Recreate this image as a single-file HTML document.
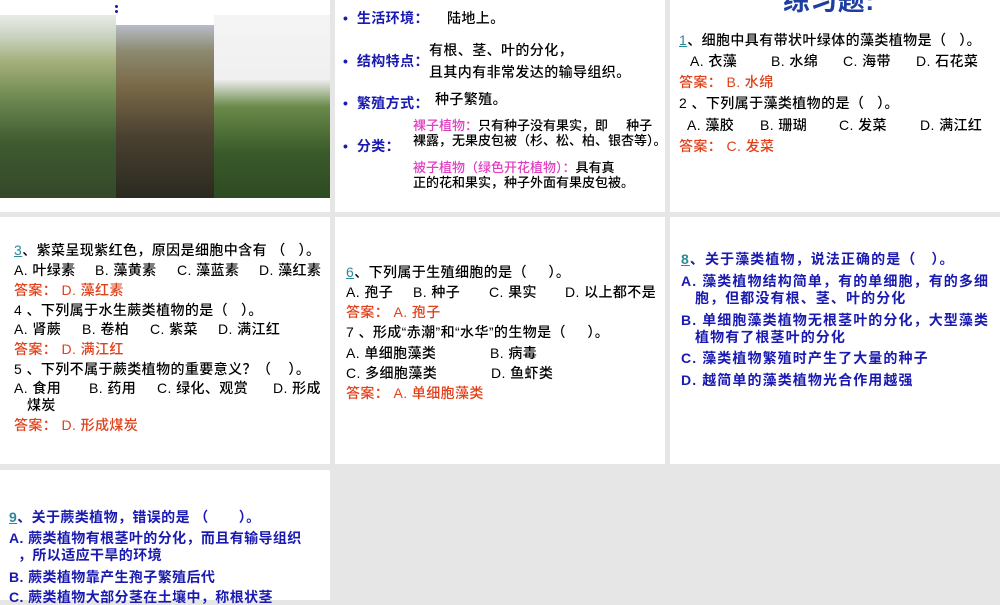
<!DOCTYPE html>
<html><head><meta charset="utf-8"><style>
body{margin:0;width:1000px;height:600px;background:#e6e6e6;position:relative;overflow:hidden;font-family:"Liberation Sans","Noto Sans CJK SC",sans-serif;}
.p{position:absolute;background:#fff;}
.t{position:absolute;white-space:nowrap;font-size:14px;letter-spacing:0.4px;line-height:16px;color:#000;font-weight:500;}
.b{color:#1a1ab0;font-weight:bold;}
.w{letter-spacing:1.1px;}
.r{color:#e0401a;}
.pk{color:#e040c0;}
.u{color:#2a8a9a;text-decoration:underline;}
.s{font-size:13px;letter-spacing:0;}
</style></head><body>
<div class="p" style="left:0;top:0;width:330px;height:212px"></div>
<div class="p" style="left:335px;top:0;width:330px;height:212px"></div>
<div class="p" style="left:670px;top:0;width:330px;height:212px"></div>
<div class="p" style="left:0;top:217px;width:330px;height:247px"></div>
<div class="p" style="left:335px;top:217px;width:330px;height:247px"></div>
<div class="p" style="left:670px;top:217px;width:330px;height:247px"></div>
<div class="p" style="left:0;top:470px;width:330px;height:130px"></div>

<!-- photo -->
<div style="position:absolute;left:0;top:15px;width:116px;height:183px;background:linear-gradient(#e8ece8 0%,#c8d2c0 12%,#a6b07c 25%,#6f8a52 45%,#3e5a30 70%,#34482a 100%)"></div>
<div style="position:absolute;left:116px;top:25px;width:98px;height:173px;background:linear-gradient(#b8bcc8 0%,#8c8a70 15%,#7a6a48 35%,#4a4030 65%,#2a2a20 100%)"></div>
<div style="position:absolute;left:214px;top:15px;width:116px;height:183px;background:linear-gradient(#f4f4f4 0%,#f0f0f0 35%,#6a8a4a 50%,#3a5a2a 75%,#2e4a22 100%)"></div>
<div style="position:absolute;left:115px;top:5px;width:3px;height:3px;border-radius:50%;background:#1a1ab0"></div>
<div style="position:absolute;left:115px;top:10px;width:3px;height:3px;border-radius:50%;background:#1a1ab0"></div>

<!-- col2 row1 -->
<div class="t b" style="left:343px;top:10px">•&nbsp; 生活环境：</div>
<div class="t" style="left:447px;top:10px">陆地上。</div>
<div class="t b" style="left:343px;top:53px">•&nbsp; 结构特点：</div>
<div class="t" style="left:429px;top:42px">有根、茎、叶的分化，</div>
<div class="t" style="left:429px;top:64px">且其内有非常发达的输导组织。</div>
<div class="t b" style="left:343px;top:95px">•&nbsp; 繁殖方式：</div>
<div class="t" style="left:435px;top:91px">种子繁殖。</div>
<div class="t b" style="left:343px;top:138px">•&nbsp; 分类：</div>
<div class="t s" style="left:413px;top:118px"><span class="pk">裸子植物：</span>只有种子没有果实，即&nbsp;&nbsp;&nbsp;&nbsp; 种子</div>
<div class="t s" style="left:413px;top:133px">裸露，无果皮包被（杉、松、柏、银杏等）。</div>
<div class="t s" style="left:413px;top:160px"><span class="pk">被子植物（绿色开花植物）：</span>具有真</div>
<div class="t s" style="left:413px;top:175px">正的花和果实，种子外面有果皮包被。</div>

<!-- col3 row1 -->
<div class="t b" style="left:783px;top:-14px;font-size:27px;line-height:30px;color:#1f3fa0">练习题:</div>
<div class="t" style="left:679px;top:32px"><span class="u">1</span>、细胞中具有带状叶绿体的藻类植物是（&nbsp;&nbsp; ）。</div>
<div class="t" style="left:690px;top:53px">A. 衣藻</div><div class="t" style="left:771px;top:53px">B. 水绵</div><div class="t" style="left:843px;top:53px">C. 海带</div><div class="t" style="left:916px;top:53px">D. 石花菜</div>
<div class="t r" style="left:679px;top:74px">答案： B. 水绵</div>
<div class="t" style="left:679px;top:95px">2 、下列属于藻类植物的是（&nbsp;&nbsp; ）。</div>
<div class="t" style="left:687px;top:117px">A. 藻胶</div><div class="t" style="left:760px;top:117px">B. 珊瑚</div><div class="t" style="left:839px;top:117px">C. 发菜</div><div class="t" style="left:920px;top:117px">D. 满江红</div>
<div class="t r" style="left:679px;top:138px">答案： C. 发菜</div>

<!-- col1 row2 -->
<div class="t" style="left:14px;top:242px"><span class="u">3</span>、紫菜呈现紫红色，原因是细胞中含有 （&nbsp;&nbsp; ）。</div>
<div class="t" style="left:14px;top:262px">A. 叶绿素</div><div class="t" style="left:95px;top:262px">B. 藻黄素</div><div class="t" style="left:177px;top:262px">C. 藻蓝素</div><div class="t" style="left:259px;top:262px">D. 藻红素</div>
<div class="t r" style="left:14px;top:282px">答案： D. 藻红素</div>
<div class="t" style="left:14px;top:302px">4 、下列属于水生蕨类植物的是（&nbsp;&nbsp; ）。</div>
<div class="t" style="left:14px;top:321px">A. 肾蕨</div><div class="t" style="left:82px;top:321px">B. 卷柏</div><div class="t" style="left:150px;top:321px">C. 紫菜</div><div class="t" style="left:218px;top:321px">D. 满江红</div>
<div class="t r" style="left:14px;top:341px">答案： D. 满江红</div>
<div class="t" style="left:14px;top:361px">5 、下列不属于蕨类植物的重要意义？（&nbsp;&nbsp;&nbsp; ）。</div>
<div class="t" style="left:14px;top:380px">A. 食用</div><div class="t" style="left:89px;top:380px">B. 药用</div><div class="t" style="left:157px;top:380px">C. 绿化、观赏</div><div class="t" style="left:273px;top:380px">D. 形成</div>
<div class="t" style="left:27px;top:397px">煤炭</div>
<div class="t r" style="left:14px;top:417px">答案： D. 形成煤炭</div>

<!-- col2 row2 -->
<div class="t" style="left:346px;top:264px"><span class="u">6</span>、下列属于生殖细胞的是（&nbsp;&nbsp;&nbsp;&nbsp; ）。</div>
<div class="t" style="left:346px;top:284px">A. 孢子</div><div class="t" style="left:413px;top:284px">B. 种子</div><div class="t" style="left:489px;top:284px">C. 果实</div><div class="t" style="left:565px;top:284px">D. 以上都不是</div>
<div class="t r" style="left:346px;top:304px">答案： A. 孢子</div>
<div class="t" style="left:346px;top:324px">7 、形成“赤潮”和“水华”的生物是（&nbsp;&nbsp;&nbsp;&nbsp; ）。</div>
<div class="t" style="left:346px;top:345px">A. 单细胞藻类</div><div class="t" style="left:490px;top:345px">B. 病毒</div>
<div class="t" style="left:346px;top:365px">C. 多细胞藻类</div><div class="t" style="left:491px;top:365px">D. 鱼虾类</div>
<div class="t r" style="left:346px;top:385px">答案： A. 单细胞藻类</div>

<!-- col3 row2 -->
<div class="t b w" style="left:681px;top:251px"><span class="u">8</span>、关于藻类植物，说法正确的是（&nbsp;&nbsp; ）。</div>
<div class="t b w" style="left:681px;top:273px">A. 藻类植物结构简单，有的单细胞，有的多细</div>
<div class="t b w" style="left:695px;top:290px">胞，但都没有根、茎、叶的分化</div>
<div class="t b w" style="left:681px;top:312px">B. 单细胞藻类植物无根茎叶的分化，大型藻类</div>
<div class="t b w" style="left:695px;top:329px">植物有了根茎叶的分化</div>
<div class="t b w" style="left:681px;top:350px">C. 藻类植物繁殖时产生了大量的种子</div>
<div class="t b w" style="left:681px;top:372px">D. 越简单的藻类植物光合作用越强</div>

<!-- row3 -->
<div class="t b" style="left:9px;top:509px"><span class="u">9</span>、关于蕨类植物，错误的是 （&nbsp;&nbsp;&nbsp;&nbsp;&nbsp;&nbsp; ）。</div>
<div class="t b" style="left:9px;top:530px">A. 蕨类植物有根茎叶的分化，而且有输导组织</div>
<div class="t b" style="left:18px;top:547px">，所以适应干旱的环境</div>
<div class="t b" style="left:9px;top:569px">B. 蕨类植物靠产生孢子繁殖后代</div>
<div class="t b" style="left:9px;top:589px">C. 蕨类植物大部分茎在土壤中，称根状茎</div>
</body></html>
